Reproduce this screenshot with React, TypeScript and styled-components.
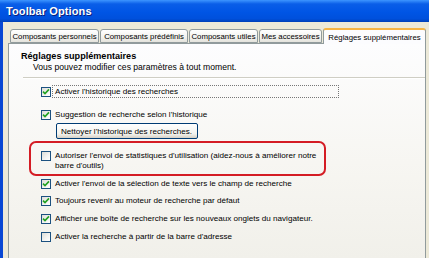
import React from "react";
import styled, { createGlobalStyle } from "styled-components";

const GlobalStyle = createGlobalStyle`
  html, body {
    margin: 0;
    padding: 0;
    width: 429px;
    height: 258px;
    overflow: hidden;
    background: #ece9d8;
  }
`;

const Window = styled.div`
  display: flex;
  flex-direction: column;
  width: 429px;
  height: 258px;
  font-family: "Liberation Sans", Arial, sans-serif;
  color: #000;
`;

const TitleBar = styled.div`
  height: 22px;
  flex-shrink: 0;
  display: flex;
  align-items: center;
  padding-left: 6px;
  background: linear-gradient(
    180deg,
    #3d95ff 0%,
    #0a5ee8 18%,
    #0055e5 55%,
    #0050dc 85%,
    #0040b8 100%
  );
  color: #fff;
  font-weight: bold;
  font-size: 11px;
  letter-spacing: 0.1px;
  text-shadow: 1px 1px 0 #0a1e7a;
`;

const Frame = styled.div`
  flex: 1;
  display: flex;
  flex-direction: column;
  border-left: 3px solid #0847d4;
  padding: 4px 3px 0 5px;
  min-height: 0;
`;

const TabRow = styled.div`
  display: flex;
  align-items: flex-end;
  height: 17px;
  padding-left: 2px;
  position: relative;
  z-index: 1;
`;

const Tab = styled.div<{ $active?: boolean; $w: number }>`
  width: ${(p) => p.$w}px;
  box-sizing: border-box;
  height: ${(p) => (p.$active ? "16px" : "14px")};
  display: flex;
  align-items: center;
  justify-content: center;
  overflow: hidden;
  margin-right: ${(p) => (p.$active ? "0" : "1px")};
  margin-bottom: ${(p) => (p.$active ? "-1px" : "0")};
  font-size: 7.8px;
  white-space: nowrap;
  border: 1px solid #919b9c;
  border-bottom: ${(p) => (p.$active ? "none" : "1px solid #919b9c")};
  border-top: ${(p) => (p.$active ? "2px solid #f6b443" : "1px solid #919b9c")};
  border-radius: 3px 3px 0 0;
  background: ${(p) =>
    p.$active ? "#fcfcfe" : "linear-gradient(180deg, #ffffff 0%, #f3f3ef 60%, #e4e3dc 100%)"};
`;

const Panel = styled.div`
  flex: 1;
  border: 1px solid #919b9c;
  border-bottom: none;
  background: linear-gradient(180deg, #fdfdfe 0%, #f7f6f2 55%, #f1f0ea 100%);
  padding: 5px 0 0 12px;
  display: flex;
  flex-direction: column;
`;

const Heading = styled.div`
  font-weight: bold;
  font-size: 9.1px;
  line-height: 12px;
  margin-top: 1px;
`;

const Description = styled.div`
  font-size: 8.6px;
  line-height: 11px;
  margin-left: 12px;
`;

const Separator = styled.div`
  margin: 4px 0 0 2px;
  height: 1px;
  background: #cfcec4;
  border-bottom: 1px solid #ffffff;
`;

const Options = styled.div`
  display: flex;
  flex-direction: column;
  padding-left: 20px;
  margin-top: 7px;
`;

const Row = styled.label<{ $top: number }>`
  display: flex;
  align-items: flex-start;
  gap: 2px;
  margin-top: ${(p) => p.$top}px;
  font-size: 8.1px;
  line-height: 10px;
  white-space: nowrap;
`;

const Box = styled.span`
  width: 10px;
  height: 10px;
  flex-shrink: 0;
  box-sizing: border-box;
  border: 1px solid #1c5180;
  background: linear-gradient(135deg, #dcdcd7 0%, #f4f4f2 60%, #ffffff 100%);
  display: flex;
  align-items: center;
  justify-content: center;
  margin-top: 1px;
`;

const Label = styled.span<{ $focus?: boolean }>`
  padding: 1px 2px 0 2px;
  width: ${(p) => (p.$focus ? "281px" : "auto")};
  outline: ${(p) => (p.$focus ? "1px dotted #777" : "none")};
`;

const Button = styled.div`
  margin: 3px 0 0 15px;
  align-self: flex-start;
  height: 16px;
  box-sizing: border-box;
  border: 1px solid #003c74;
  border-radius: 2px;
  background: linear-gradient(180deg, #ffffff 0%, #f3f3ee 70%, #d6d0c5 100%);
  font-size: 8.1px;
  white-space: nowrap;
  display: flex;
  align-items: center;
  padding: 0 5px 0 4px;
`;

const Highlight = styled.div`
  margin: 2px 0 0 -12px;
  width: 297px;
  height: 35px;
  box-sizing: border-box;
  border: 2.5px solid #d41c24;
  border-radius: 7px;
  padding: 7px 0 0 10px;
  display: flex;
`;

const Check = () => (
  <svg width="8" height="8" viewBox="0 0 8 8">
    <path d="M1 3.6 L3 5.6 L7 1.4" fill="none" stroke="#21a121" strokeWidth="1.6" />
  </svg>
);

const Option: React.FC<{
  checked?: boolean;
  top: number;
  focus?: boolean;
  children: React.ReactNode;
}> = ({ checked, top, focus, children }) => (
  <Row $top={top}>
    <Box>{checked && <Check />}</Box>
    <Label $focus={focus}>{children}</Label>
  </Row>
);

const tabs = [
  { label: "Composants personnels", w: 89 },
  { label: "Composants prédéfinis", w: 88 },
  { label: "Composants utiles", w: 69 },
  { label: "Mes accessoires", w: 63 },
];

const App: React.FC = () => {
  return (
    <Window>
      <GlobalStyle />
      <TitleBar>Toolbar Options</TitleBar>
      <Frame>
        <TabRow>
          {tabs.map((t) => (
            <Tab key={t.label} $w={t.w}>
              {t.label}
            </Tab>
          ))}
          <Tab $active $w={103}>
            Réglages supplémentaires
          </Tab>
        </TabRow>
        <Panel>
          <Heading>Réglages supplémentaires</Heading>
          <Description>Vous pouvez modifier ces paramètres à tout moment.</Description>
          <Separator />
          <Options>
            <Option checked top={0} focus>
              Activer l'historique des recherches
            </Option>
            <Option checked top={12}>
              Suggestion de recherche selon l'historique
            </Option>
            <Button>Nettoyer l'historique des recherches.</Button>
            <Highlight>
              <Option top={0}>
                Autoriser l'envoi de statistiques d'utilisation (aidez-nous à améliorer notre
                <br />
                barre d'outils)
              </Option>
            </Highlight>
            <Option checked top={2}>
              Activer l'envoi de la sélection de texte vers le champ de recherche
            </Option>
            <Option checked top={6}>
              Toujours revenir au moteur de recherche par défaut
            </Option>
            <Option checked top={7}>
              Afficher une boîte de recherche sur les nouveaux onglets du navigateur.
            </Option>
            <Option top={7}>Activer la recherche à partir de la barre d'adresse</Option>
          </Options>
        </Panel>
      </Frame>
    </Window>
  );
};

export default App;
